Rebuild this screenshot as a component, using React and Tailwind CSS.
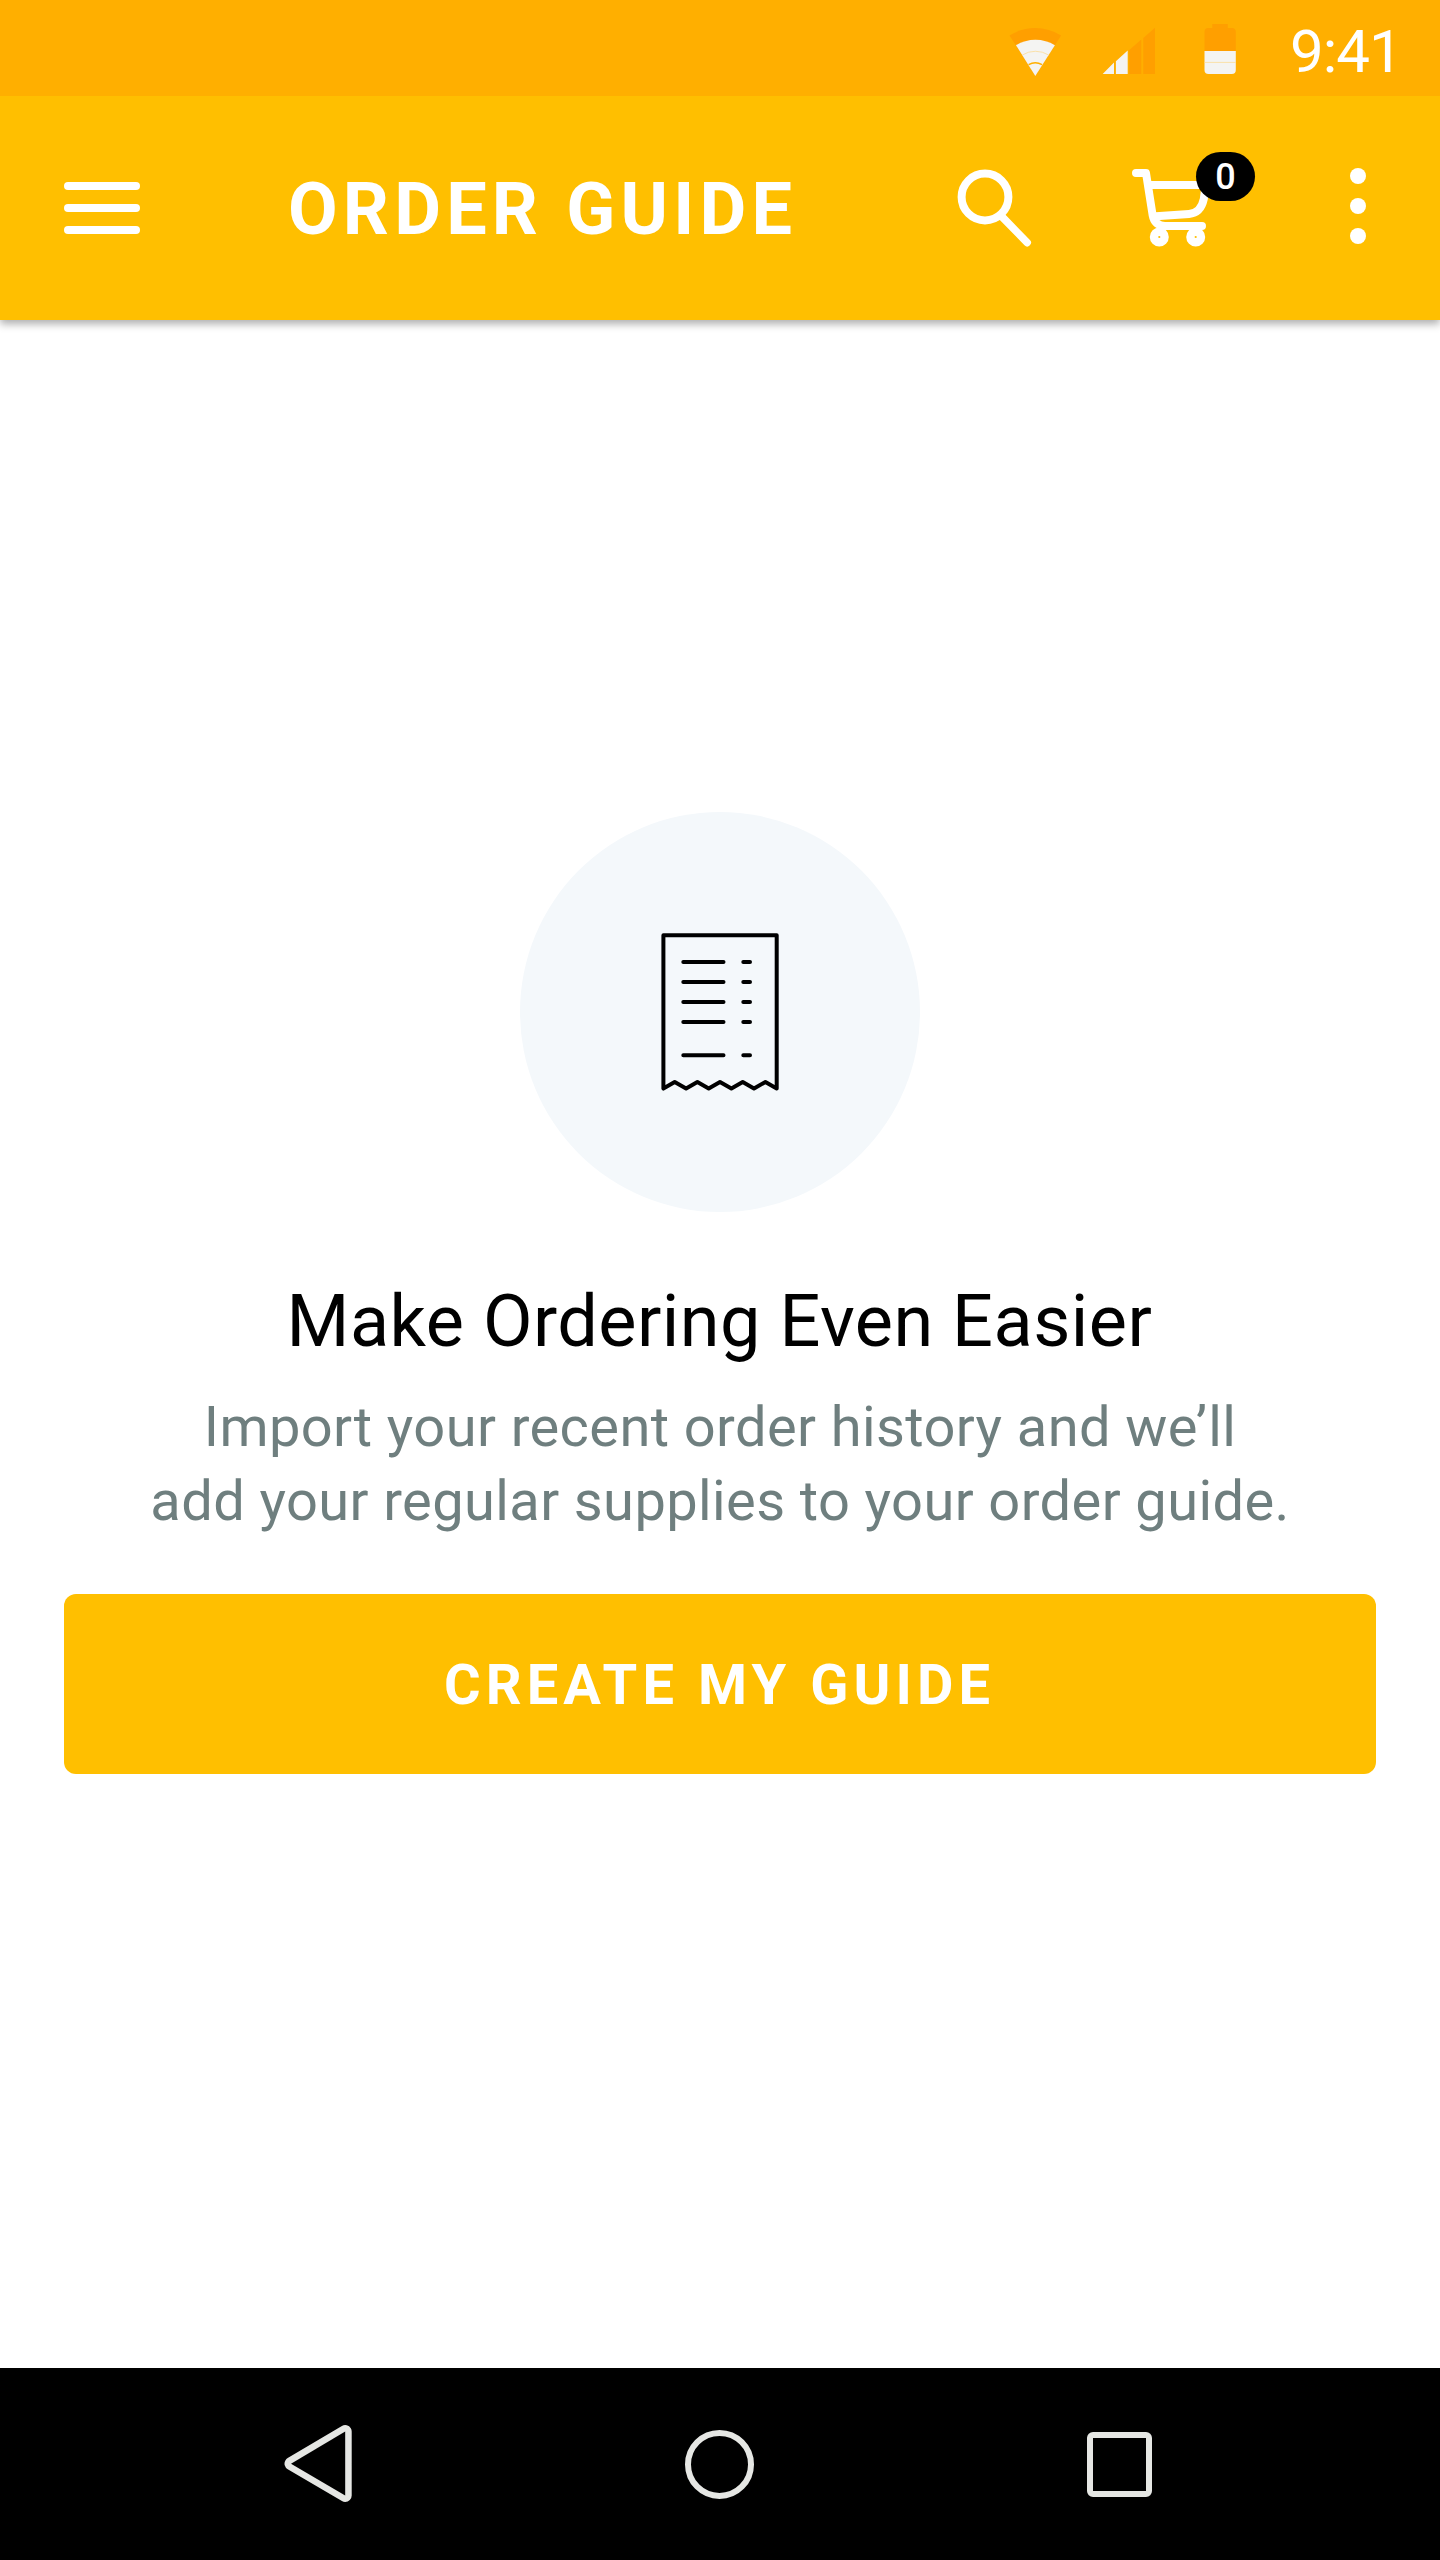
function StatusBar() {
  return (
    <div className="relative z-10 flex h-24 items-center justify-end bg-[#ffaf00] pr-[41px] text-white">
      <svg className="mr-[40px]" width="54" height="96" viewBox="1008 0 54 96" fill="none">
        <path d="M1035.3 76 L1009.5 35.5 A48 48 0 0 1 1061.1 35.5 Z" fill="#ff9f00" />
        <path d="M1035.3 76 L1016 45.2 A37 37 0 0 1 1054.9 45.2 Z" fill="#f4f4f2" />
        <path d="M1022.3 55 A25 25 0 0 1 1048.6 55" stroke="#fbdc97" strokeWidth="0.8" />
        <path d="M1028.6 64.6 A13.6 13.6 0 0 1 1042 64.6" stroke="#ffaf00" strokeWidth="1.6" />
      </svg>
      <svg className="mr-[48px]" width="54" height="96" viewBox="1102 0 54 96">
        <path d="M1102.7 74 L1114 62.6 V74Z M1115.9 74 V61.3 L1127.7 50.6 V74Z" fill="#f4f4f2" />
        <path d="M1129.3 74 V50 L1141.3 39.5 V74Z M1143.3 74 V38 L1155 27.7 V74Z" fill="#ff9f00" />
      </svg>
      <svg className="mr-[53px]" width="33" height="96" viewBox="1204 0 33 96">
        <path d="M1212.3 28 V24 H1227.8 V28 H1232 Q1235.8 28 1235.8 32 V51 H1204.5 V32 Q1204.5 28 1208.3 28Z" fill="#ff9f00" />
        <path d="M1204.5 51 H1235.8 V70 Q1235.8 74 1231.8 74 H1208.5 Q1204.5 74 1204.5 70Z" fill="#f4f4f2" />
        <path d="M1204.5 62.4 H1235.8" stroke="#fbdc97" strokeWidth="0.8" />
      </svg>
      <span className="mt-[7px] w-[109px] whitespace-nowrap text-[60px] leading-[60px] tracking-[-1px]">9:41</span>
    </div>
  );
}

function Header() {
  return (
    <header className="relative flex h-56 items-center bg-[#ffbf00] text-white shadow-[0_4px_8px_rgba(0,0,0,0.32)]">
      <button className="ml-16 flex flex-col gap-[14px]" aria-label="Menu">
        <span className="h-2 w-[76px] rounded-full bg-white" />
        <span className="h-2 w-[76px] rounded-full bg-white" />
        <span className="h-2 w-[76px] rounded-full bg-white" />
      </button>
      <h1 className="mt-[4px] ml-[148px] w-[669px] whitespace-nowrap text-[72px] leading-[84px] font-bold tracking-[5.2px]">
        ORDER GUIDE
      </h1>
      <svg width="76" height="224" viewBox="957 96 76 224" fill="none" stroke="white">
        <circle cx="985" cy="197" r="23.4" strokeWidth="8" />
        <path d="M1001.8 216.5 L1027.2 242.6" strokeWidth="7.6" strokeLinecap="round" />
      </svg>
      <div className="relative ml-[97px] h-56 w-[132px]">
        <svg width="132" height="224" viewBox="1130 96 132 224" fill="none" stroke="white" strokeWidth="8" strokeLinecap="round" strokeLinejoin="round">
          <path d="M1136 173 H1146 L1152.6 215 C1153.8 221.5 1157.5 225.8 1165 226 H1202" />
          <path d="M1149 185 H1205.6 L1203.8 199 C1202 207.5 1197 213.3 1189 214 L1156 216.2" />
          <circle cx="1159.3" cy="237" r="5.3" strokeWidth="8.4" />
          <circle cx="1195.7" cy="237" r="5.3" strokeWidth="8.4" />
        </svg>
        <span className="absolute top-[56px] left-[66px] flex h-[49px] w-[59px] items-center justify-center rounded-[24.5px] bg-black text-[36px] leading-none font-medium">
          0
        </span>
      </div>
      <button className="ml-[88px] flex flex-col gap-[14px] pb-[4px]" aria-label="More options">
        <span className="size-4 rounded-full bg-white" />
        <span className="size-4 rounded-full bg-white" />
        <span className="size-4 rounded-full bg-white" />
      </button>
    </header>
  );
}

function ReceiptIcon() {
  return (
    <svg width="400" height="400" viewBox="520 812 400 400" fill="none" stroke="black" strokeWidth="4" strokeLinecap="round" strokeLinejoin="round">
      <path d="M663.4 935.3 H776.7 V1088.6 L765.4 1082 L754 1088.6 L742.7 1082 L731.4 1088.6 L720 1082 L708.7 1088.6 L697.4 1082 L686.1 1088.6 L674.7 1082 L663.4 1088.6Z" />
      <path d="M683.3 962 H723.5 M743.3 962 H750 M683.3 982 H723.5 M743.3 982 H750 M683.3 1002 H723.5 M743.3 1002 H750 M683.3 1022 H723.5 M743.3 1022 H750 M683.3 1055.3 H723.5 M743.3 1055.3 H750" />
    </svg>
  );
}

function NavigationBar() {
  return (
    <nav className="flex h-48 items-center bg-black pl-[284px]">
      <svg width="68" height="192" viewBox="284 2368 68 192">
        <path d="M291 2463.7 L345.2 2431.6 V2495.4Z" fill="black" stroke="#e6e7e4" strokeWidth="13" strokeLinejoin="round" className="[paint-order:stroke]" />
      </svg>
      <svg className="ml-[332px]" width="72" height="192" viewBox="684 2368 72 192" fill="none">
        <circle cx="719.5" cy="2464.4" r="31.5" stroke="#e6e7e4" strokeWidth="6" />
      </svg>
      <span className="mt-px ml-[331px] size-[65px] rounded-[6px] border-6 border-[#e6e7e4]" />
    </nav>
  );
}

export default function App() {
  return (
    <div className="flex h-[2560px] w-[1440px] flex-col overflow-hidden bg-white font-['Roboto',sans-serif]">
      <StatusBar />
      <Header />
      <main className="flex flex-1 flex-col items-center px-16 pt-[492px] text-center">
        <div className="size-[400px] rounded-full bg-[#f4f8fb]">
          <ReceiptIcon />
        </div>
        <h2 className="mt-[68px] pr-[1px] text-[72px] leading-[84px] whitespace-nowrap tracking-[0.5px] text-black">
          Make Ordering Even Easier
        </h2>
        <p className="mt-[26px] text-[56px] leading-[74px] whitespace-nowrap tracking-[0.4px] text-[#6f7f7f]">
          Import your recent order history and we’ll
          <br />
          add your regular supplies to your order guide.
        </p>
        <button className="mt-[56px] h-[180px] w-full rounded-xl bg-[#ffbf00] pt-[2px] pr-[1px] text-[56px] font-bold tracking-[5.1px] text-white">
          CREATE MY GUIDE
        </button>
      </main>
      <NavigationBar />
    </div>
  );
}
